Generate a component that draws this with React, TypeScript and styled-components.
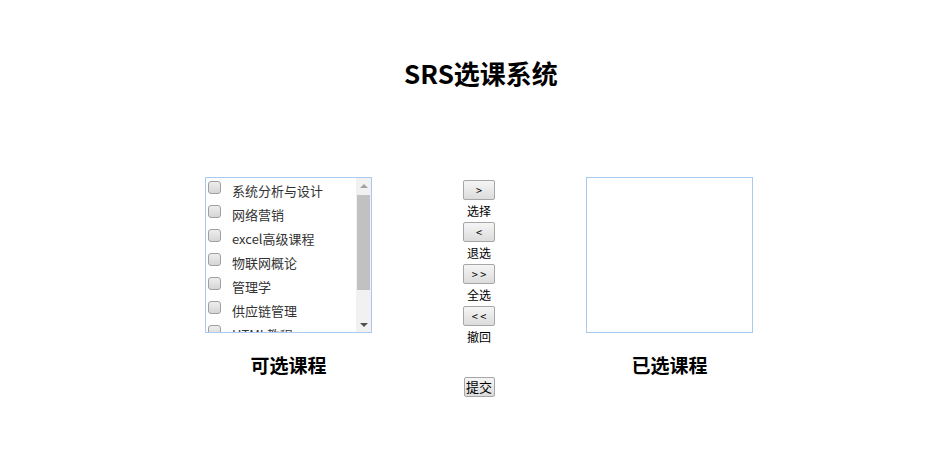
import { FC } from "react"
import styled, { createGlobalStyle, css } from "styled-components"

const GlobalStyle = createGlobalStyle`
    body {
        margin: 0;
        background: #fff;
        font-family: "Noto Sans CJK SC", "Liberation Sans", sans-serif;
    }
`
const Page = styled.div`
    width: 934px;
    height: 453px;
    padding-top: 58px;
    box-sizing: border-box;
`
const Title = styled.h1`
    margin: 0;
    text-align: center;
    font-size: 26px;
    line-height: 30px;
    font-weight: bold;
    color: #000;
    padding-left: 28px;
`
const Row = styled.div`
    display: flex;
    justify-content: center;
    align-items: flex-start;
    gap: 91px;
    margin-top: 89px;
    padding-left: 24px;
`
const Column = styled.div`
    display: flex;
    flex-direction: column;
    align-items: center;
`
const Box = styled.div`
    display: flex;
    width: 167px;
    height: 156px;
    box-sizing: border-box;
    border: 1px solid #a9c9ef;
    background: #fff;
`
const List = styled.div`
    flex: 1;
    overflow: hidden;
`
// fake scrollbar, the page screenshot hides the native one
const ScrollBar = styled.div`
    width: 15px;
    display: flex;
    flex-direction: column;
    background: #f1f1f1;
`
const Arrow = styled.div<{down?:boolean}>`
    height: 15px;
    display: flex;
    align-items: center;
    justify-content: center;
    &::after {
        content: "";
        width: 0;
        height: 0;
        border-left: 4px solid transparent;
        border-right: 4px solid transparent;
        ${({down})=>down?css`
            border-top: 4px solid #505050;
        `:css`
            border-bottom: 4px solid #a3a3a3;
        `}
    }
`
const Track = styled.div`
    flex: 1;
    padding: 2px 1px 0;
`
const Thumb = styled.div`
    height: 95px;
    background: #c1c1c1;
`
const Caption = styled.div`
    margin-top: 20px;
    font-size: 19px;
    line-height: 24px;
    font-weight: bold;
    color: #000;
`
const Item = styled.label`
    display: flex;
    align-items: center;
    height: 24px;
    padding-left: 2px;
    font-size: 13px;
    color: #333;
    white-space: nowrap;
`
const Check = styled.input`
    appearance: none;
    flex-shrink: 0;
    width: 13px;
    height: 13px;
    margin: -5px 11px 0 0;
    border: 1px solid #a0a0a0;
    border-radius: 3px;
    background: linear-gradient(#ededed, #d6d6d6);
    box-sizing: border-box;
`
const Middle = styled.div`
    width: 32px;
    padding-top: 3px;
    display: flex;
    flex-direction: column;
    align-items: center;
`
const Btn = styled.button<{wide?:boolean}>`
    width: ${({wide})=>wide?"31px":"32px"};
    height: 20px;
    padding: 0;
    font-family: inherit;
    font-size: ${({wide})=>wide?"13px":"11px"};
    line-height: 18px;
    color: #000;
    border: 1px solid #a6a6a6;
    border-radius: 2px;
    background: linear-gradient(#f5f5f5, #dcdcdc);
`
const Hint = styled.div`
    font-size: 12px;
    line-height: 22px;
    color: #000;
    white-space: nowrap;
`
const Submit = styled.div`
    display: flex;
    margin-top: 29px;
`

const courses = ["系统分析与设计", "网络营销", "excel高级课程", "物联网概论", "管理学", "供应链管理", "HTML教程"]

const actions = [
    {sign: ">", text: "选择"},
    {sign: "<", text: "退选"},
    {sign: "> >", text: "全选"},
    {sign: "< <", text: "撤回"},
]

const App: FC = () => {
    return (
        <Page>
            <GlobalStyle />
            <Title>SRS选课系统</Title>
            <Row>
                <Column>
                    <Box>
                        <List>
                            {courses.map((c, i) => (
                                <Item key={i}>
                                    <Check type="checkbox" />
                                    {c}
                                </Item>
                            ))}
                        </List>
                        <ScrollBar>
                            <Arrow />
                            <Track><Thumb /></Track>
                            <Arrow down />
                        </ScrollBar>
                    </Box>
                    <Caption>可选课程</Caption>
                </Column>
                <Middle>
                    {actions.map((a, i) => (
                        <Column key={i}>
                            <Btn>{a.sign}</Btn>
                            <Hint>{a.text}</Hint>
                        </Column>
                    ))}
                    <Submit>
                        <Btn wide>提交</Btn>
                    </Submit>
                </Middle>
                <Column>
                    <Box />
                    <Caption>已选课程</Caption>
                </Column>
            </Row>
        </Page>
    )
}

export default App
